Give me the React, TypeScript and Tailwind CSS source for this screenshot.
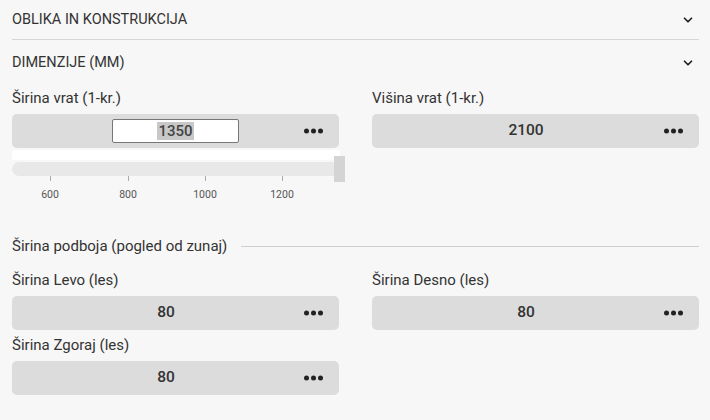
import { ChevronDown } from "lucide-react";

const font = "font-['Roboto','Liberation_Sans',sans-serif]";

function Dots() {
  return (
    <div className="flex items-center gap-[2px]">
      <span className="block w-[5px] h-[5px] rounded-full bg-[#222]" />
      <span className="block w-[5px] h-[5px] rounded-full bg-[#222]" />
      <span className="block w-[5px] h-[5px] rounded-full bg-[#222]" />
    </div>
  );
}

function Field({ label, value, editing }: { label: string; value: string; editing?: boolean }) {
  return (
    <div>
      <div className="h-[20px] flex items-center text-[15px] text-[#333]">{label}</div>
      <div className="relative mt-[6px] h-[34px] rounded-[5px] bg-[#dcdcdc] flex items-center justify-center">
        {editing ? (
          <div className="w-[127px] h-[24px] bg-white border border-[#777] rounded-[2px] flex items-center justify-center">
            <span className="bg-[#c8c8c8] text-[15px] font-medium text-[#444] leading-[18px] px-[1px]">{value}</span>
          </div>
        ) : (
          <span className="pr-[19px] text-[15.5px] font-medium text-[#333]">{value}</span>
        )}
        <div className="absolute right-[16px] top-1/2 -translate-y-1/2">
          <Dots />
        </div>
      </div>
    </div>
  );
}

function Slider() {
  const ticks = [
    { v: "600", x: 38 },
    { v: "800", x: 116 },
    { v: "1000", x: 193 },
    { v: "1200", x: 270 },
  ];
  return (
    <div className="relative h-[56px] w-[334px]">
      <div className="h-[10px] w-[328px] bg-white" />
      <div className="mt-[2px] h-[14px] w-[328px] rounded-l-[7px] bg-[#e8e8e8]" />
      <div className="absolute left-[322px] top-[6px] w-[11px] h-[26px] bg-[#d4d4d4]" />
      {ticks.map((t) => (
        <div key={t.v} className="absolute top-[26px] flex flex-col items-center w-[40px]" style={{ left: t.x - 20 }}>
          <span className="block w-px h-[5px] bg-[#aaa]" />
          <span className="mt-[6px] text-[10.5px] text-[#555]">{t.v}</span>
        </div>
      ))}
    </div>
  );
}

export default function App() {
  return (
    <div className={`${font} w-[710px] h-[420px] bg-[#f7f7f7] pl-[12px] pr-[11px] overflow-hidden`}>
      <div className="h-[40px] border-b border-[#d6d6d6] flex items-center justify-between">
        <span className="text-[14.5px] text-[#333]">OBLIKA IN KONSTRUKCIJA</span>
        <ChevronDown size={14} strokeWidth={3} className="text-[#222] mr-[4px]" />
      </div>
      <div className="h-[46px] flex items-center justify-between">
        <span className="text-[14.5px] text-[#333]">DIMENZIJE (MM)</span>
        <ChevronDown size={14} strokeWidth={3} className="text-[#222] mr-[4px]" />
      </div>

      <div className="mt-[2px] grid grid-cols-2 gap-x-[33px]">
        <div>
          <Field label="Širina vrat (1-kr.)" value="1350" editing />
          <div className="mt-[2px]">
            <Slider />
          </div>
        </div>
        <Field label="Višina vrat (1-kr.)" value="2100" />
      </div>

      <div className="mt-[29px] h-[22px] flex items-center gap-[14px]">
        <span className="text-[15px] text-[#333] whitespace-nowrap">Širina podboja (pogled od zunaj)</span>
        <span className="block flex-1 h-px bg-[#cfcfcf]" />
      </div>

      <div className="mt-[13px] grid grid-cols-2 gap-x-[33px] gap-y-[5px]">
        <Field label="Širina Levo (les)" value="80" />
        <Field label="Širina Desno (les)" value="80" />
        <Field label="Širina Zgoraj (les)" value="80" />
      </div>
    </div>
  );
}
